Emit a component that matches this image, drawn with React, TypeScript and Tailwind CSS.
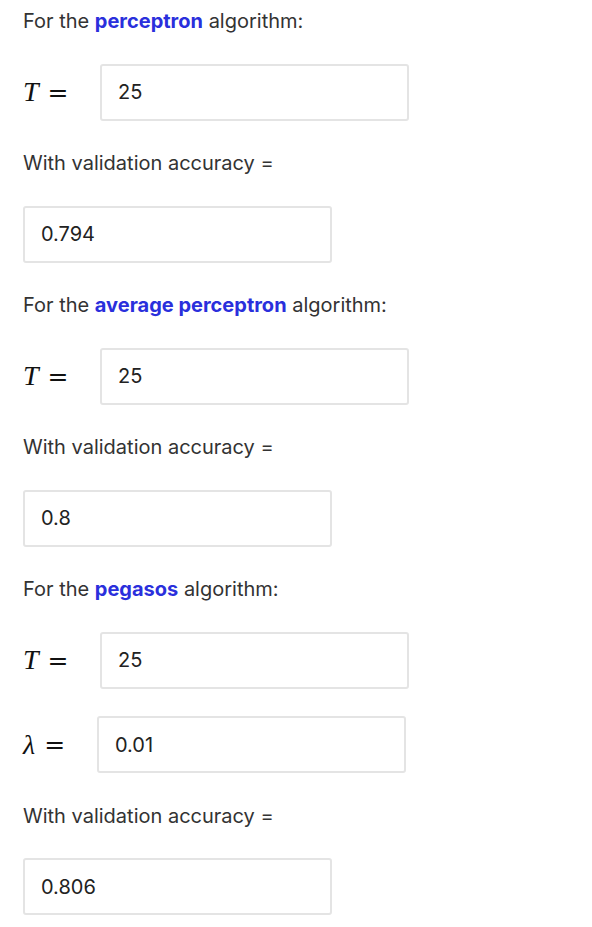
import React from 'react';

const inputBox =
  'h-[57px] w-[309px] rounded-[3px] border-2 border-[#e4e4e4] bg-white pl-[16px] flex items-center text-[20px] text-[#222]';

function MathLabel({ symbol }: { symbol: string }) {
  return (
    <span className="flex items-center whitespace-nowrap leading-none text-[#111]">
      <span className="text-[28px] italic [font-family:'Liberation_Serif',serif]">{symbol}</span>
      <span className="ml-[9px] text-[25px] [font-family:'DejaVu_Serif',serif]">=</span>
    </span>
  );
}

function ParamRow({ symbol, value }: { symbol: string; value: string }) {
  return (
    <div className="flex items-center">
      <div className={symbol === 'λ' ? 'w-[74px]' : 'w-[77px]'}>
        <MathLabel symbol={symbol} />
      </div>
      <div className={inputBox}>{value}</div>
    </div>
  );
}

function Section({ name, params, accuracy }: { name: string; params: Array<{ symbol: string; value: string }>; accuracy: string }) {
  return (
    <>
      <p className="leading-[30px]">
        For the <span className="font-bold text-[#2a2fdc]">{name}</span> algorithm:
      </p>
      {params.map((p) => (
        <ParamRow key={p.symbol} symbol={p.symbol} value={p.value} />
      ))}
      <p className="leading-[30px]">With validation accuracy =</p>
      <div className={inputBox}>{accuracy}</div>
    </>
  );
}

export default function App() {
  return (
    <div className="min-h-[927px] bg-white pl-[23px] pt-[6px] text-[20px] text-[#333] [font-family:Inter,sans-serif]">
      <div className="flex flex-col gap-[27.5px]">
        <Section name="perceptron" params={[{ symbol: 'T', value: '25' }]} accuracy="0.794" />
        <Section name="average perceptron" params={[{ symbol: 'T', value: '25' }]} accuracy="0.8" />
        <Section
          name="pegasos"
          params={[
            { symbol: 'T', value: '25' },
            { symbol: 'λ', value: '0.01' },
          ]}
          accuracy="0.806"
        />
      </div>
    </div>
  );
}
